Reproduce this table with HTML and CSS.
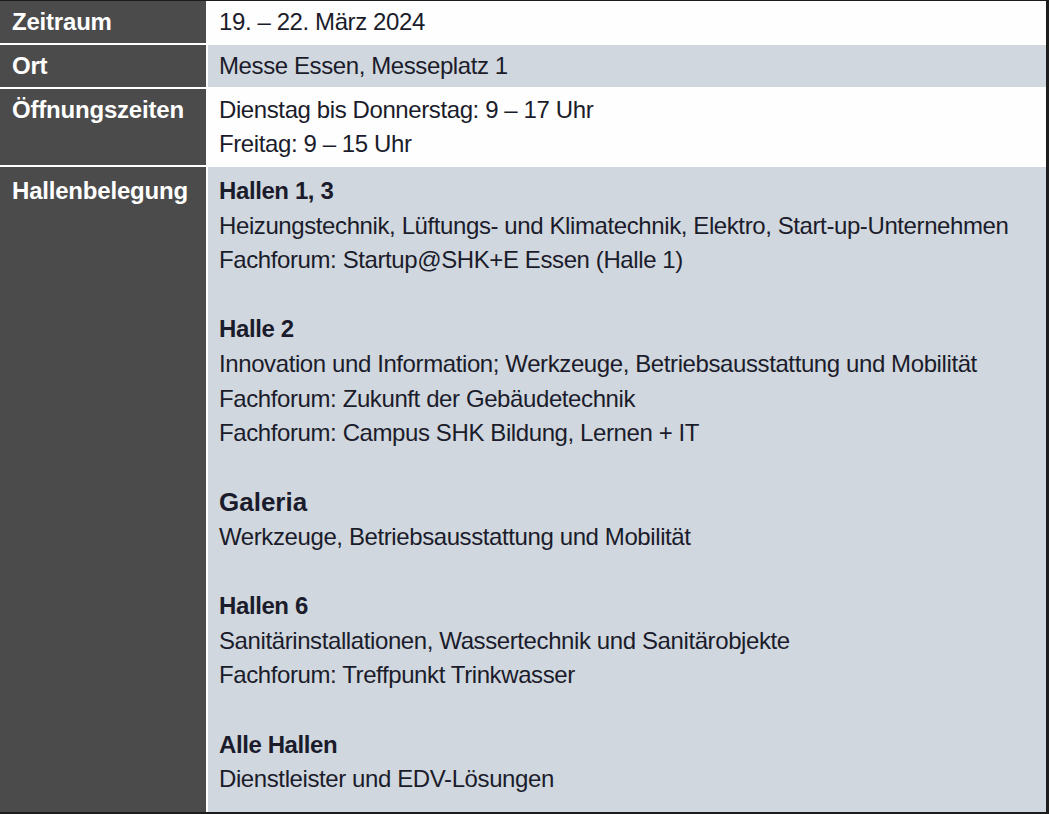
FILE: index.html
```html
<!DOCTYPE html>
<html lang="de">
<head>
<meta charset="utf-8">
<title>Messe Info</title>
<link rel="stylesheet" href="styles.css">
</head>
<body>
<div class="sheet">
  <div class="label row-zeitraum">Zeitraum</div>
  <div class="value white row-zeitraum">19. – 22. März 2024</div>

  <div class="label row-ort">Ort</div>
  <div class="value grey row-ort">Messe Essen, Messeplatz 1</div>

  <div class="label row-oeff">Öffnungszeiten</div>
  <div class="value white row-oeff">Dienstag bis Donnerstag: 9 – 17 Uhr<br>Freitag: 9 – 15 Uhr</div>

  <div class="label row-hallen">Hallenbelegung</div>
  <div class="value grey row-hallen">
    <div class="block">
      <div class="head">Hallen 1, 3</div>
      <div>Heizungstechnik, Lüftungs- und Klimatechnik, Elektro, Start-up-Unternehmen</div>
      <div>Fachforum: Startup@SHK+E Essen (Halle 1)</div>
    </div>
    <div class="block">
      <div class="head">Halle 2</div>
      <div>Innovation und Information; Werkzeuge, Betriebsausstattung und Mobilität</div>
      <div>Fachforum: Zukunft der Gebäudetechnik</div>
      <div>Fachforum: Campus SHK Bildung, Lernen + IT</div>
    </div>
    <div class="block">
      <div class="head big">Galeria</div>
      <div>Werkzeuge, Betriebsausstattung und Mobilität</div>
    </div>
    <div class="block">
      <div class="head">Hallen 6</div>
      <div>Sanitärinstallationen, Wassertechnik und Sanitärobjekte</div>
      <div>Fachforum: Treffpunkt Trinkwasser</div>
    </div>
    <div class="block">
      <div class="head">Alle Hallen</div>
      <div>Dienstleister und EDV-Lösungen</div>
    </div>
  </div>
</div>
</body>
</html>
```

FILE: styles.css
```css
html, body {
  margin: 0;
  padding: 0;
  background: #ffffff;
}

.sheet {
  width: 1046px;
  height: 811px;
  display: grid;
  grid-template-columns: 206px 1fr;
  grid-template-rows: 42px 42px 76px 1fr;
  column-gap: 2px;
  row-gap: 2px;
  border-top: 1px solid #1d1d1d;
  border-right: 3px solid #1d1d1d;
  border-bottom: 2px solid #1d1d1d;
  background: #ffffff;
  font-family: "Liberation Sans", Arial, sans-serif;
  color: #1b1c2b;
}

.label {
  background: #4b4b4b;
  color: #ffffff;
  font-weight: bold;
  font-size: 24px;
  letter-spacing: -0.2px;
  line-height: 34px;
  padding: 4px 0 0 12px;
}

.value {
  font-size: 24px;
  letter-spacing: -0.4px;
  line-height: 34px;
  padding: 4px 0 0 11px;
}

.white { background: #fefefe; }
.grey { background: #d1d7de; }

.row-hallen.value {
  padding-top: 7px;
  line-height: 34.6px;
  display: flex;
  flex-direction: column;
  gap: 34.6px;
}

.row-hallen.label { padding-top: 7px; }

.head {
  font-weight: bold;
}

.head.big {
  font-size: 26px;
  letter-spacing: 0;
}
```
